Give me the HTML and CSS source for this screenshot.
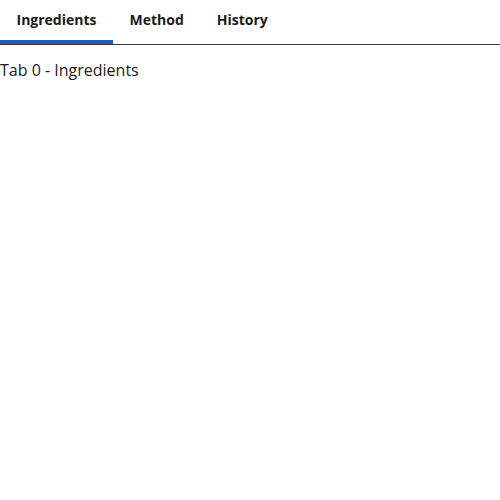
FILE: index.html
```html
<!DOCTYPE html>
<html>
<head>
<meta charset="utf-8">
<link rel="stylesheet" href="styles.css">
</head>
<body>
<div class="tabs">
  <div class="tab active">Ingredients</div>
  <div class="tab">Method</div>
  <div class="tab">History</div>
</div>
<div class="panel">Tab 0 - Ingredients</div>
</body>
</html>
```
FILE: styles.css
```css
body {
  margin: 0;
  font-family: "Open Sans", sans-serif;
  color: #1a1a1a;
  background: #fff;
}
.tabs {
  display: flex;
  border-bottom: 1px solid #3c3c3c;
}
.tab {
  padding: 9px 16.5px 10px;
  font-size: 14px;
  font-weight: 700;
  line-height: 21px;
  border-bottom: 4px solid transparent;
  color: #1a1a1a;
}
.tab.active {
  border-bottom-color: #1e5bbf;
}
.panel {
  font-size: 16px;
  line-height: 24px;
  padding-top: 13px;
}
```
